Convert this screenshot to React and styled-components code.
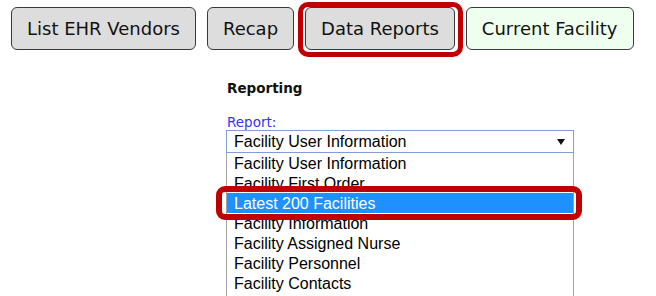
import React from 'react';
import styled, { createGlobalStyle } from 'styled-components';

const GlobalStyle = createGlobalStyle`
  html, body {
    margin: 0;
    padding: 0;
    background: #fff;
    overflow: hidden;
  }
  body {
    font-family: "DejaVu Sans", Verdana, sans-serif;
  }
`;

const Page = styled.div`
  width: 656px;
  height: 296px;
  overflow: hidden;
`;

const NavBar = styled.div`
  display: flex;
  gap: 11px;
  padding: 7px 0 0 11px;
`;

const NavButton = styled.div`
  position: relative;
  display: flex;
  align-items: center;
  height: 43px;
  box-sizing: border-box;
  padding: 0 15px;
  border: 1px solid #3a3a3a;
  border-radius: 6px;
  background: ${p => (p.$current ? '#efffef' : '#dddddd')};
  color: #111;
  font-size: 18px;
  white-space: nowrap;

  ${p => p.$marked && `
    &::after {
      content: '';
      position: absolute;
      left: -8px;
      right: -9px;
      top: -6px;
      bottom: -8px;
      border: 5px solid #c00000;
      border-radius: 10px;
    }
  `}
`;

const Section = styled.div`
  margin-top: 30px;
  padding-left: 226px;
`;

const Heading = styled.div`
  padding-left: 1px;
  font-weight: bold;
  font-size: 13.5px;
  line-height: 16px;
  color: #111;
`;

const Label = styled.div`
  margin-top: 18px;
  padding-left: 1px;
  font-size: 13.5px;
  line-height: 16px;
  color: #3232ff;
`;

const SelectBox = styled.div`
  width: 348px;
  height: 23px;
  box-sizing: border-box;
  display: flex;
  align-items: center;
  justify-content: space-between;
  padding: 0 8px 0 7px;
  border: 1px solid #7f9fd6;
  font-family: "Liberation Sans", Arial, sans-serif;
  font-size: 16px;
  color: #000;
`;

const ListBox = styled.div`
  width: 348px;
  height: 160px;
  box-sizing: border-box;
  border: 1px solid #a3a3a3;
  border-top: none;
  font-family: "Liberation Sans", Arial, sans-serif;
  font-size: 16px;
`;

const Option = styled.div`
  position: relative;
  height: 20px;
  line-height: 21px;
  padding-left: 7px;
  white-space: nowrap;
  background: ${p => (p.$selected ? '#1e90ff' : 'transparent')};
  color: ${p => (p.$selected ? '#fff' : '#000')};

  ${p => p.$marked && `
    &::after {
      content: '';
      position: absolute;
      z-index: 2;
      left: -11px;
      right: -9px;
      top: -7px;
      bottom: -7px;
      border: 6px solid #c00000;
      border-radius: 9px;
    }
  `}
`;

const Arrow = () => (
  <svg width="8" height="6" viewBox="0 0 8 6">
    <polygon points="0,0 8,0 4,6" fill="#111" />
  </svg>
);

const reports = [
  'Facility User Information',
  'Facility First Order',
  'Latest 200 Facilities',
  'Facility Information',
  'Facility Assigned Nurse',
  'Facility Personnel',
  'Facility Contacts',
];

export default function App() {
  return (
    <Page>
      <GlobalStyle />
      <NavBar>
        <NavButton>List EHR Vendors</NavButton>
        <NavButton>Recap</NavButton>
        <NavButton $marked>Data Reports</NavButton>
        <NavButton $current>Current Facility</NavButton>
      </NavBar>
      <Section>
        <Heading>Reporting</Heading>
        <Label>Report:</Label>
        <SelectBox>
          <span>Facility User Information</span>
          <Arrow />
        </SelectBox>
        <ListBox>
          {reports.map((r, i) => (
            <Option key={r} $selected={i === 2} $marked={i === 2}>
              {r}
            </Option>
          ))}
        </ListBox>
      </Section>
    </Page>
  );
}
